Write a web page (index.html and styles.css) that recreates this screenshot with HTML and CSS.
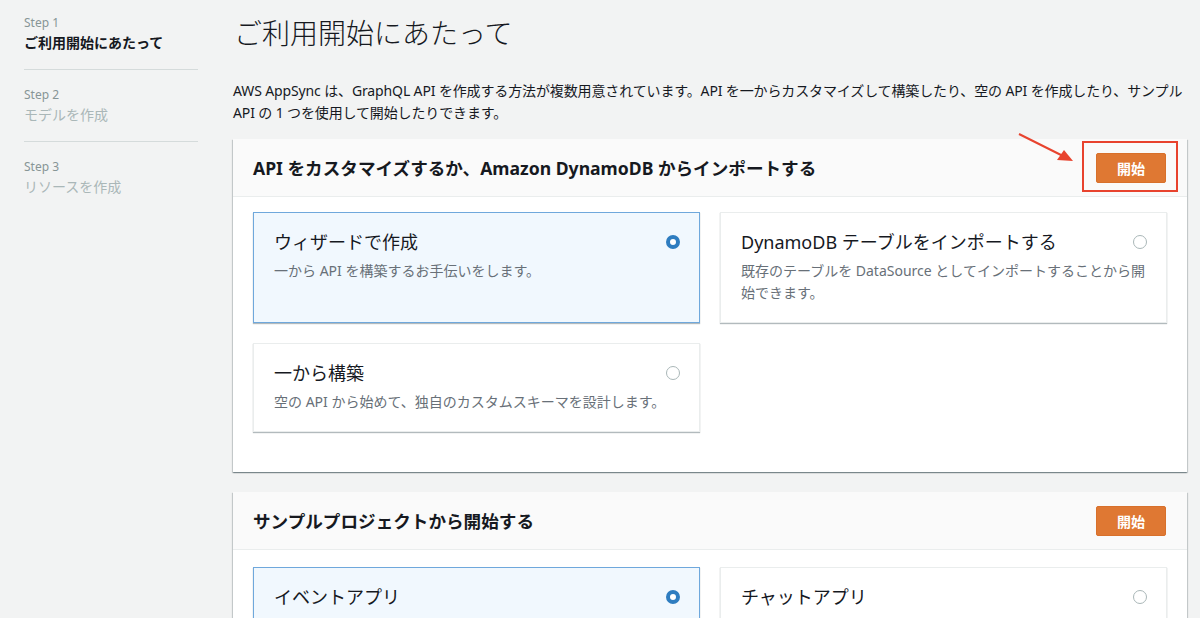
FILE: index.html
```html
<!DOCTYPE html>
<html lang="ja">
<head>
<meta charset="utf-8">
<title>AWS AppSync</title>
<link rel="stylesheet" href="styles.css">
</head>
<body>
<div class="layout">
  <nav class="steps">
    <div class="step active">
      <div class="step-label">Step 1</div>
      <div class="step-title">ご利用開始にあたって</div>
    </div>
    <div class="step">
      <div class="step-label">Step 2</div>
      <div class="step-title">モデルを作成</div>
    </div>
    <div class="step last">
      <div class="step-label">Step 3</div>
      <div class="step-title">リソースを作成</div>
    </div>
  </nav>
  <main class="main">
    <h1 class="page-title">ご利用開始にあたって</h1>
    <p class="intro">AWS AppSync は、GraphQL API を作成する方法が複数用意されています。API を一からカスタマイズして構築したり、空の API を作成したり、サンプル<br>API の 1 つを使用して開始したりできます。</p>

    <section class="card">
      <header class="card-header">
        <h2 class="card-title">API をカスタマイズするか、Amazon DynamoDB からインポートする</h2>
        <button class="btn-primary">開始</button>
        <span class="highlight"></span>
        <svg class="arrow" width="70" height="40" viewBox="0 0 70 40">
          <line x1="2" y1="2" x2="48" y2="25" stroke="#e8432e" stroke-width="2"/>
          <polygon points="56,29 40,28 47,18" fill="#e8432e"/>
        </svg>
      </header>
      <div class="card-body">
        <div class="tile selected">
          <div class="tile-head"><span class="tile-title">ウィザードで作成</span><span class="radio on"></span></div>
          <div class="tile-desc">一から API を構築するお手伝いをします。</div>
        </div>
        <div class="tile">
          <div class="tile-head"><span class="tile-title">DynamoDB テーブルをインポートする</span><span class="radio"></span></div>
          <div class="tile-desc">既存のテーブルを DataSource としてインポートすることから開始できます。</div>
        </div>
        <div class="tile">
          <div class="tile-head"><span class="tile-title">一から構築</span><span class="radio"></span></div>
          <div class="tile-desc">空の API から始めて、独自のカスタムスキーマを設計します。</div>
        </div>
      </div>
    </section>

    <section class="card">
      <header class="card-header">
        <h2 class="card-title">サンプルプロジェクトから開始する</h2>
        <button class="btn-primary">開始</button>
      </header>
      <div class="card-body sample">
        <div class="tile selected">
          <div class="tile-head"><span class="tile-title">イベントアプリ</span><span class="radio on"></span></div>
        </div>
        <div class="tile">
          <div class="tile-head"><span class="tile-title">チャットアプリ</span><span class="radio"></span></div>
        </div>
      </div>
    </section>
  </main>
</div>
</body>
</html>
```

FILE: styles.css
```css
* { box-sizing: border-box; }
html, body { margin: 0; padding: 0; }
body {
  background: #f2f3f3;
  font-family: "Noto Sans", "Noto Sans CJK JP", sans-serif;
  color: #16191f;
  font-size: 14px;
  overflow: hidden;
}
.layout {
  display: flex;
  align-items: flex-start;
}
.steps {
  width: 174px;
  margin-left: 24px;
  flex: none;
}
.step {
  padding: 16px 0 15px;
  border-bottom: 1px solid #d5dbdb;
}
.step:first-child { padding-top: 14px; }
.step.last { border-bottom: none; }
.step-label {
  font-size: 12px;
  line-height: 18px;
  color: #879596;
}
.step-title {
  font-size: 14px;
  line-height: 22px;
  color: #aab7b8;
}
.step.active .step-title {
  color: #16191f;
  font-weight: 700;
}
.main {
  width: 954px;
  margin-left: 35px;
  padding-top: 15px;
  flex: none;
}
.page-title {
  margin: 0 0 29px 1px;
  font-size: 28px;
  line-height: 36px;
  font-weight: 300;
  color: #16191f;
}
.intro {
  margin: 0 0 15px;
  font-size: 14px;
  line-height: 22px;
  letter-spacing: -0.13px;
  white-space: nowrap;
}
.card {
  background: #fff;
  margin-bottom: 20px;
  box-shadow: 0 1px 1px 0 rgba(0, 28, 36, 0.3), 1px 1px 1px 0 rgba(0, 28, 36, 0.15), -1px 1px 1px 0 rgba(0, 28, 36, 0.15);
}
.card-header {
  position: relative;
  height: 58px;
  background: #fafafa;
  border-bottom: 1px solid #eaeded;
  display: flex;
  align-items: center;
  justify-content: space-between;
  padding: 0 21px 0 20px;
}
.card-title {
  margin: 0;
  font-size: 17.6px;
  line-height: 24px;
  font-weight: 700;
}
.btn-primary {
  width: 70px;
  height: 30px;
  background: #df7833;
  border: 1px solid #d8702b;
  border-radius: 2px;
  color: #fff;
  font-family: inherit;
  font-weight: 700;
  font-size: 14px;
  padding: 0;
}
.highlight {
  position: absolute;
  right: 9px;
  top: 2px;
  width: 96px;
  height: 51px;
  border: 2px solid #e8432e;
}
.arrow {
  position: absolute;
  left: 784px;
  top: -7px;
}
.card-body {
  display: grid;
  grid-template-columns: 1fr 1fr;
  gap: 20px;
  padding: 15px 20px 40px;
}
.card-body.sample {
  padding-top: 17px;
}
.tile {
  background: #fff;
  border: 1px solid #eaeded;
  box-shadow: 0 1px 1px 0 rgba(0, 28, 36, 0.3);
  padding: 17px 19px 18px 20px;
}
.tile.selected {
  background: #f1f8fe;
  border-color: #6fa8dc;
}
.tile-head {
  display: flex;
  align-items: center;
  justify-content: space-between;
}
.tile-title {
  font-size: 18px;
  line-height: 24px;
}
.tile-desc {
  margin-top: 6px;
  font-size: 14px;
  line-height: 22px;
  color: #687078;
}
.radio {
  width: 14px;
  height: 14px;
  border-radius: 50%;
  border: 1px solid #aab7b8;
  background: #fff;
  flex: none;
}
.radio.on {
  border: 4px solid #2f7dc0;
}
```
